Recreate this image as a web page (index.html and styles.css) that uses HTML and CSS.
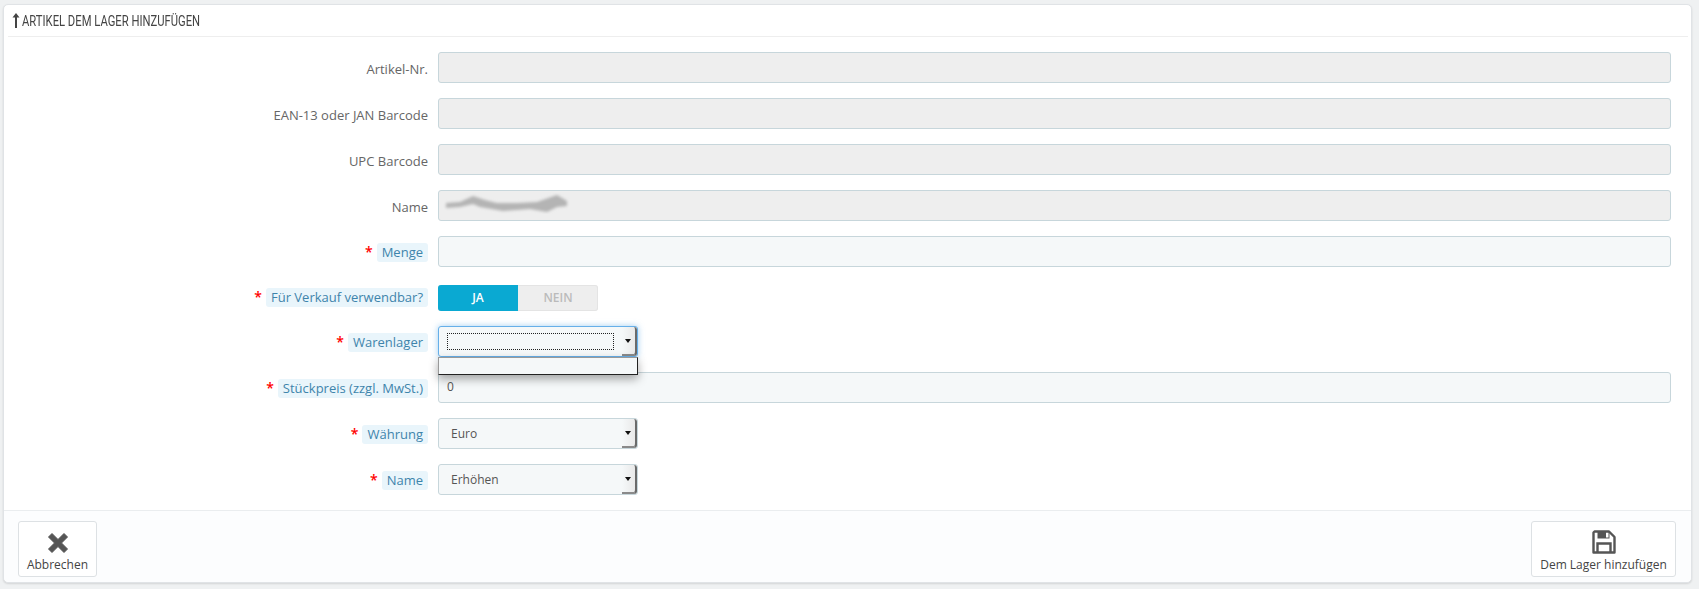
FILE: index.html
```html
<!DOCTYPE html>
<html lang="de">
<head>
    <meta charset="UTF-8">
    <title>Artikel dem Lager hinzufügen</title>
    <link rel="stylesheet" href="styles.css">
</head>
<body>
    <div class="panel">
        <div class="panel-heading">
            <svg class="heading-icon" width="8" height="15" viewBox="0 0 8 15"><path d="M4 0 L7.5 4.5 H5 V15 H3 V4.5 H0.5 Z" fill="#444"/></svg>
            <span class="heading-text">ARTIKEL DEM LAGER HINZUFÜGEN</span>
        </div>

        <div class="form">
            <div class="row">
                <div class="label-col"><span class="plain-label">Artikel-Nr.</span></div>
                <div class="input disabled"></div>
            </div>
            <div class="row">
                <div class="label-col"><span class="plain-label">EAN-13 oder JAN Barcode</span></div>
                <div class="input disabled"></div>
            </div>
            <div class="row">
                <div class="label-col"><span class="plain-label">UPC Barcode</span></div>
                <div class="input disabled"></div>
            </div>
            <div class="row">
                <div class="label-col"><span class="plain-label">Name</span></div>
                <div class="input disabled">
                    <svg class="blurred" width="136" height="26" viewBox="0 0 136 26">
                        <defs><filter id="smear"><feGaussianBlur stdDeviation="1.8"/></filter></defs>
                        <path d="M4 11 L18 10 L31 4 L43 8 L55 11 L75 11 L95 10 L115 3 L125 9 L125 14 L115 15 L105 20 L88 17 L61 19 L38 15 L31 12 L18 15 L4 16 Z" fill="#b4b4b4" filter="url(#smear)"/>
                    </svg>
                </div>
            </div>
            <div class="row">
                <div class="label-col"><span class="star">*</span><span class="hint-label">Menge</span></div>
                <div class="input"></div>
            </div>
            <div class="row row-switch">
                <div class="label-col"><span class="star">*</span><span class="hint-label">Für Verkauf verwendbar?</span></div>
                <div class="switch">
                    <span class="switch-on">JA</span>
                    <span class="switch-off">NEIN</span>
                </div>
            </div>
            <div class="row">
                <div class="label-col"><span class="star">*</span><span class="hint-label">Warenlager</span></div>
                <div class="select focused">
                    <span class="select-value"><span class="focus-ring"></span></span>
                    <span class="select-arrow"></span>
                    <div class="select-menu"></div>
                </div>
            </div>
            <div class="row">
                <div class="label-col"><span class="star">*</span><span class="hint-label">Stückpreis (zzgl. MwSt.)</span></div>
                <div class="input">0</div>
            </div>
            <div class="row">
                <div class="label-col"><span class="star">*</span><span class="hint-label">Währung</span></div>
                <div class="select">
                    <span class="select-value">Euro</span>
                    <span class="select-arrow"></span>
                </div>
            </div>
            <div class="row">
                <div class="label-col"><span class="star">*</span><span class="hint-label">Name</span></div>
                <div class="select">
                    <span class="select-value">Erhöhen</span>
                    <span class="select-arrow"></span>
                </div>
            </div>
        </div>

        <div class="panel-footer">
            <button class="action-btn btn-cancel">
                <svg width="24" height="24" viewBox="0 0 24 24"><path d="M6 2.5 L12 8.5 L18 2.5 L21.5 6 L15.5 12 L21.5 18 L18 21.5 L12 15.5 L6 21.5 L2.5 18 L8.5 12 L2.5 6 Z" fill="#555" stroke="#555" stroke-width="1" stroke-linejoin="round"/></svg>
                <span>Abbrechen</span>
            </button>
            <button class="action-btn btn-save">
                <svg width="24" height="24" viewBox="0 0 24 24">
                    <path d="M2.5 1.5 H17 L22.5 7 V22.5 H1.5 V2.5 Z" fill="none" stroke="#555" stroke-width="2.4" stroke-linejoin="round"/>
                    <path d="M5.5 2 H14 V8.5 H5.5 Z" fill="#555"/>
                    <path d="M14 7.5 H16.5 V2 H17.5 V8.5 H14 Z" fill="#555"/>
                    <path d="M5.5 22 V13.5 H18.5 V22" fill="none" stroke="#555" stroke-width="2.4"/>
                </svg>
                <span>Dem Lager hinzufügen</span>
            </button>
        </div>
    </div>
</body>
</html>
```

FILE: styles.css
```css
body {
    margin: 0;
    padding: 4px 7px 6px 3px;
    background-color: #eff1f2;
    font-family: "Open Sans", Arial, sans-serif;
    font-size: 12px;
    color: #555;
}

.panel {
    background-color: white;
    border: 1px solid #e0e3e6;
    border-radius: 5px;
    box-shadow: 0 1px 2px rgba(0, 0, 0, 0.12);
    height: 577px;
    display: flex;
    flex-direction: column;
}

.panel-heading {
    margin: 0 3px 0 4px;
    height: 31px;
    padding-left: 4px;
    border-bottom: 1px solid #eeeeee;
    display: flex;
    align-items: center;
    gap: 2px;
    color: #444;
}

.heading-icon {
    flex: none;
}

.heading-text {
    font-family: "Roboto", Arial, sans-serif;
    font-size: 14px;
    display: inline-block;
    transform: scaleX(0.803);
    transform-origin: left center;
    white-space: nowrap;
}

.form {
    padding-top: 15px;
    display: flex;
    flex-direction: column;
    gap: 15px;
    flex: 1;
}

.row {
    display: flex;
    gap: 10px;
    height: 31px;
    padding-right: 20px;
}

.row-switch {
    height: 29px;
    padding-top: 3px;
    box-sizing: border-box;
}

.label-col {
    width: 424px;
    flex: none;
    display: flex;
    justify-content: flex-end;
    align-items: center;
    padding-top: 2px;
    box-sizing: border-box;
    font-size: 13px;
}

.plain-label {
    color: #666;
}

.hint-label {
    background-color: #e9f5fb;
    color: #3e84ab;
    padding: 1px 5px;
    border-radius: 3px;
    line-height: 17px;
}

.row-switch .label-col {
    margin-top: -3px;
}

.star {
    color: red;
    font-size: 14px;
    margin-right: 4px;
    margin-top: -2px;
    font-weight: 600;
}

.input {
    flex: 1;
    box-sizing: border-box;
    height: 31px;
    border: 1px solid #c7d6db;
    border-radius: 3px;
    background-color: #f5f8f9;
    padding: 0 8px;
    line-height: 27px;
    color: #555;
    font-size: 12px;
    position: relative;
}

.input.disabled {
    background-color: #eeeeee;
}

.blurred {
    position: absolute;
    left: 3px;
    top: 1px;
}

.switch {
    width: 160px;
    height: 26px;
    display: flex;
    border-radius: 3px;
    background-color: #eeeeee;
    box-shadow: inset 0 0 0 1px #e4e4e4;
    font-weight: 600;
    font-size: 12px;
    line-height: 26px;
    text-align: center;
}

.switch-on {
    width: 80px;
    background-color: #0aa9d2;
    color: white;
    border-radius: 3px 0 0 3px;
}

.switch-off {
    width: 80px;
    color: #bbb;
}

.select {
    width: 200px;
    height: 31px;
    box-sizing: border-box;
    border: 1px solid #c7d6db;
    border-radius: 3px;
    background-color: #f5f8f9;
    display: flex;
    position: relative;
}

.select.focused {
    border-color: #66afe9;
    box-shadow: 0 0 6px rgba(102, 175, 233, 0.6);
}

.select-value {
    flex: 1;
    padding-left: 12px;
    line-height: 30px;
    color: #555;
    font-size: 12px;
}

.focused .select-value {
    padding: 6px 0 5px 8px;
    display: flex;
}

.focus-ring {
    width: 165px;
    height: 15px;
    border: 1px dotted #222;
}

.select-arrow {
    width: 13px;
    border-right: 2px solid #6a6a6a;
    background: linear-gradient(to right, #f5f8f9, #e9e9e9);
    border-radius: 0 3px 3px 0;
    position: relative;
    box-shadow: inset 0 -2px 0 #8a8a8a;
}

.select-arrow::after {
    content: "";
    position: absolute;
    left: 3px;
    top: 12px;
    border-left: 3px solid transparent;
    border-right: 3px solid transparent;
    border-top: 4px solid #111;
}

.select-menu {
    position: absolute;
    left: -1px;
    top: 30px;
    width: 200px;
    height: 18px;
    box-sizing: border-box;
    background-color: #f5f8f9;
    border: 1px solid #222;
    border-top-color: #999;
    border-left-color: #999;
    box-shadow: 0 4px 10px rgba(0, 0, 0, 0.35);
    z-index: 2;
}

.panel-footer {
    height: 72px;
    box-sizing: border-box;
    background-color: #fcfdfe;
    border-top: 1px solid #eaedef;
    border-radius: 0 0 5px 5px;
    padding: 10px 15px 0 14px;
    display: flex;
    justify-content: space-between;
    align-items: flex-start;
}

.action-btn {
    height: 56px;
    background-color: white;
    border: 1px solid #dde1e4;
    border-radius: 3px;
    font-family: inherit;
    font-size: 12px;
    color: #444;
    display: flex;
    flex-direction: column;
    align-items: center;
    justify-content: flex-start;
}

.btn-cancel {
    width: 79px;
    padding: 9px 0 0;
    gap: 1px;
}

.btn-save {
    width: 145px;
    padding: 8px 0 0;
    gap: 2px;
}
```
